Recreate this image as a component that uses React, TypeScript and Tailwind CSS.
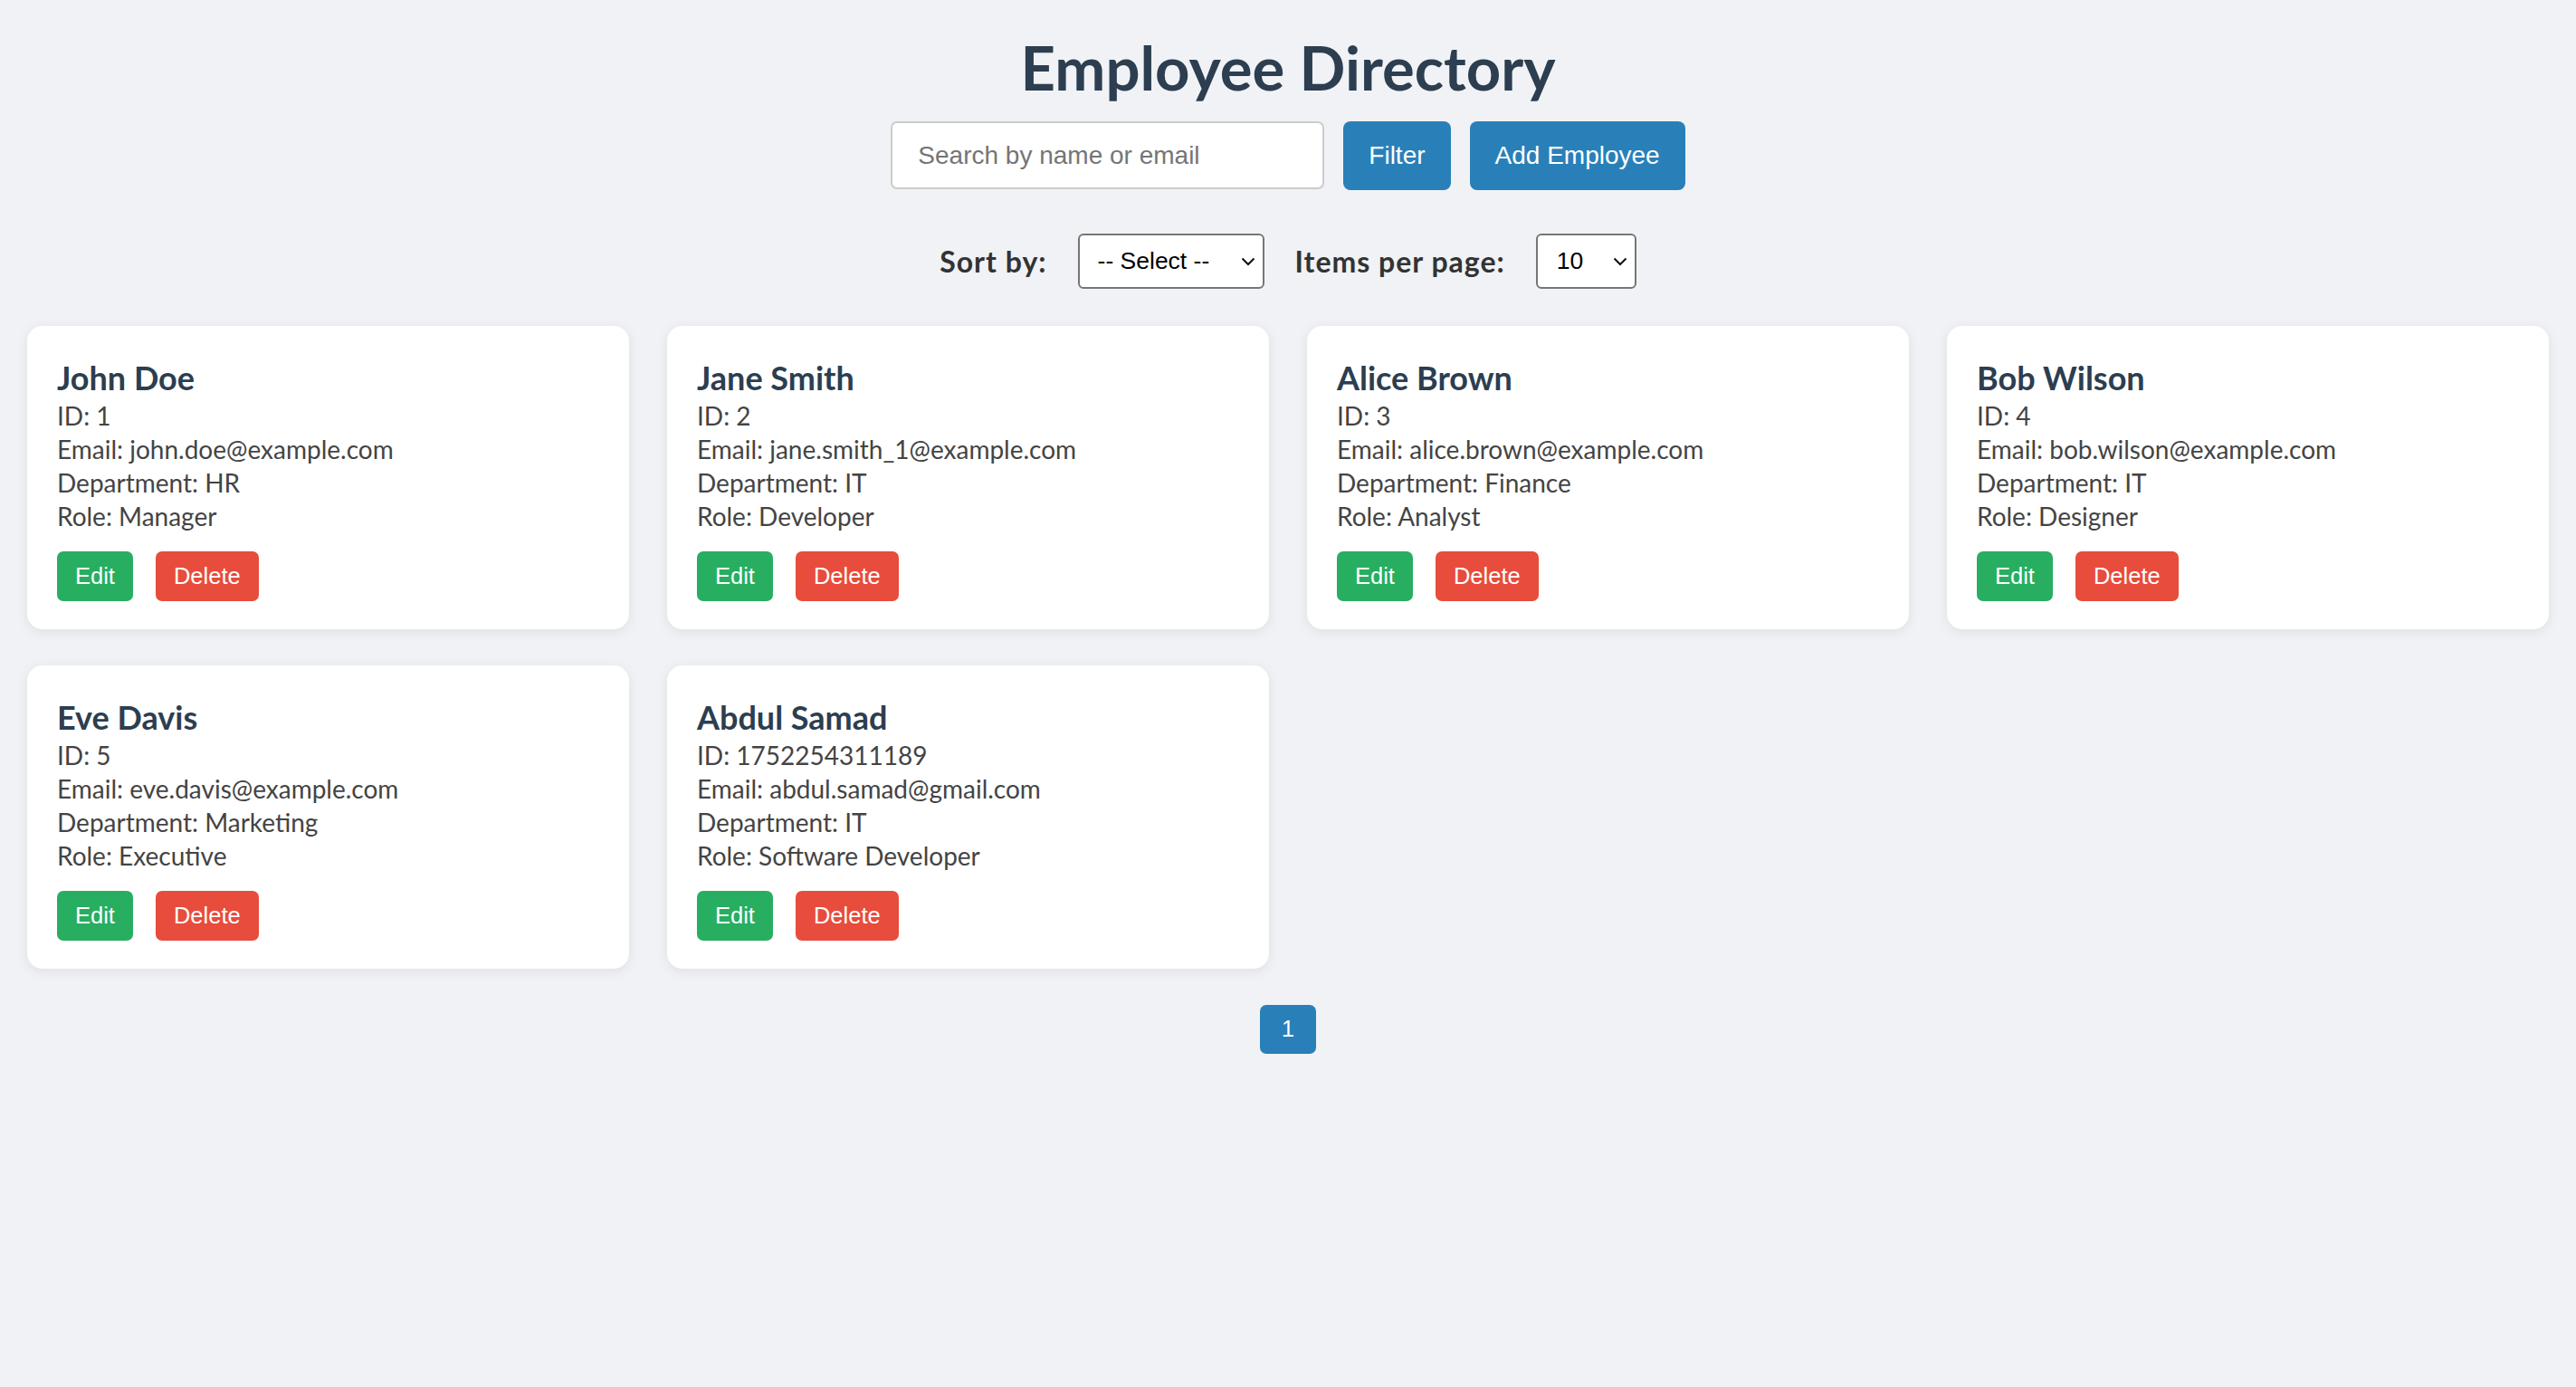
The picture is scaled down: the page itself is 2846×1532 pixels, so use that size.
import React from "react";

type Emp = { name: string; id: string; email: string; dept: string; role: string };

const employees: Emp[] = [
  { name: "John Doe", id: "1", email: "john.doe@example.com", dept: "HR", role: "Manager" },
  { name: "Jane Smith", id: "2", email: "jane.smith_1@example.com", dept: "IT", role: "Developer" },
  { name: "Alice Brown", id: "3", email: "alice.brown@example.com", dept: "Finance", role: "Analyst" },
  { name: "Bob Wilson", id: "4", email: "bob.wilson@example.com", dept: "IT", role: "Designer" },
  { name: "Eve Davis", id: "5", email: "eve.davis@example.com", dept: "Marketing", role: "Executive" },
  { name: "Abdul Samad", id: "1752254311189", email: "abdul.samad@gmail.com", dept: "IT", role: "Software Developer" },
];

const sans = "font-['Lato','Open_Sans',sans-serif]";
const arial = "font-['Liberation_Sans',Arial,sans-serif]";

function Chevron() {
  return (
    <svg width="16" height="10" viewBox="0 0 16 10" className="pointer-events-none absolute right-[8px] top-1/2 -translate-y-1/2">
      <path d="M1.5 1.5 L8 8 L14.5 1.5" fill="none" stroke="#111" strokeWidth="2" />
    </svg>
  );
}

function FakeSelect({ label, width, padLeft }: { label: string; width: string; padLeft: string }) {
  return (
    <div className={`relative h-[61px] ${width} rounded-[6px] border-[2px] border-[#767676] bg-white flex items-center ${padLeft}`}>
      <span className={`${arial} text-[26.5px] text-black leading-none`}>{label}</span>
      <Chevron />
    </div>
  );
}

function Card({ e }: { e: Emp }) {
  return (
    <div className="bg-white rounded-[17px] shadow-[0_3px_14px_rgba(0,0,0,0.08)] px-[33px] pt-[35px] pb-[31px] flex flex-col">
      <div className={`${sans} text-[36px] leading-[44px] font-bold text-[#2c3e50]`}>{e.name}</div>
      <div className={`${sans} text-[28px] leading-[37px] text-[#444] mt-[2px]`}>
        <div>ID: {e.id}</div>
        <div>Email: {e.email}</div>
        <div>Department: {e.dept}</div>
        <div>Role: {e.role}</div>
      </div>
      <div className="flex gap-[25px] mt-[20px]">
        <button className={`${arial} h-[55px] px-[20px] rounded-[7px] bg-[#27ae60] text-white text-[25.5px]`}>Edit</button>
        <button className={`${arial} h-[55px] px-[20px] rounded-[7px] bg-[#e74c3c] text-white text-[25.5px]`}>Delete</button>
      </div>
    </div>
  );
}

export default function App() {
  return (
    <div className={`min-h-screen w-full bg-[#f0f2f5] ${sans} pt-[34px]`}>
      <h1 className="text-center text-[67px] leading-[80px] font-bold text-[#2c3e50]">Employee Directory</h1>
      <div className="flex justify-center gap-[21px] mt-[20px]">
        <div className="w-[479px] h-[75px] rounded-[7px] border-[2px] border-[#cccccc] bg-white flex items-center pl-[28px]">
          <span className={`${arial} text-[28px] text-[#757575] leading-none`}>Search by name or email</span>
        </div>
        <button className={`${arial} h-[76px] px-[28px] rounded-[8px] bg-[#2980b9] text-white text-[28px]`}>Filter</button>
        <button className={`${arial} h-[76px] px-[28px] rounded-[8px] bg-[#2980b9] text-white text-[28px]`}>Add Employee</button>
      </div>
      <div className="flex justify-center items-center gap-[34px] mt-[48px]">
        <span className="text-[32px] tracking-[1px] font-bold text-[#333]">Sort by:</span>
        <FakeSelect label="-- Select --" width="w-[206px]" padLeft="pl-[20px]" />
        <span className="text-[32px] tracking-[1px] font-bold text-[#333]">Items per page:</span>
        <FakeSelect label="10" width="w-[111px]" padLeft="pl-[21px]" />
      </div>
      <div className="grid grid-cols-4 gap-x-[42px] gap-y-[40px] px-[30px] mt-[41px]">
        {employees.map((e) => (
          <Card key={e.id} e={e} />
        ))}
      </div>
      <div className="flex justify-center mt-[40px]">
        <button className={`${arial} w-[62px] h-[54px] rounded-[7px] bg-[#2980b9] text-white text-[25px]`}>1</button>
      </div>
    </div>
  );
}
